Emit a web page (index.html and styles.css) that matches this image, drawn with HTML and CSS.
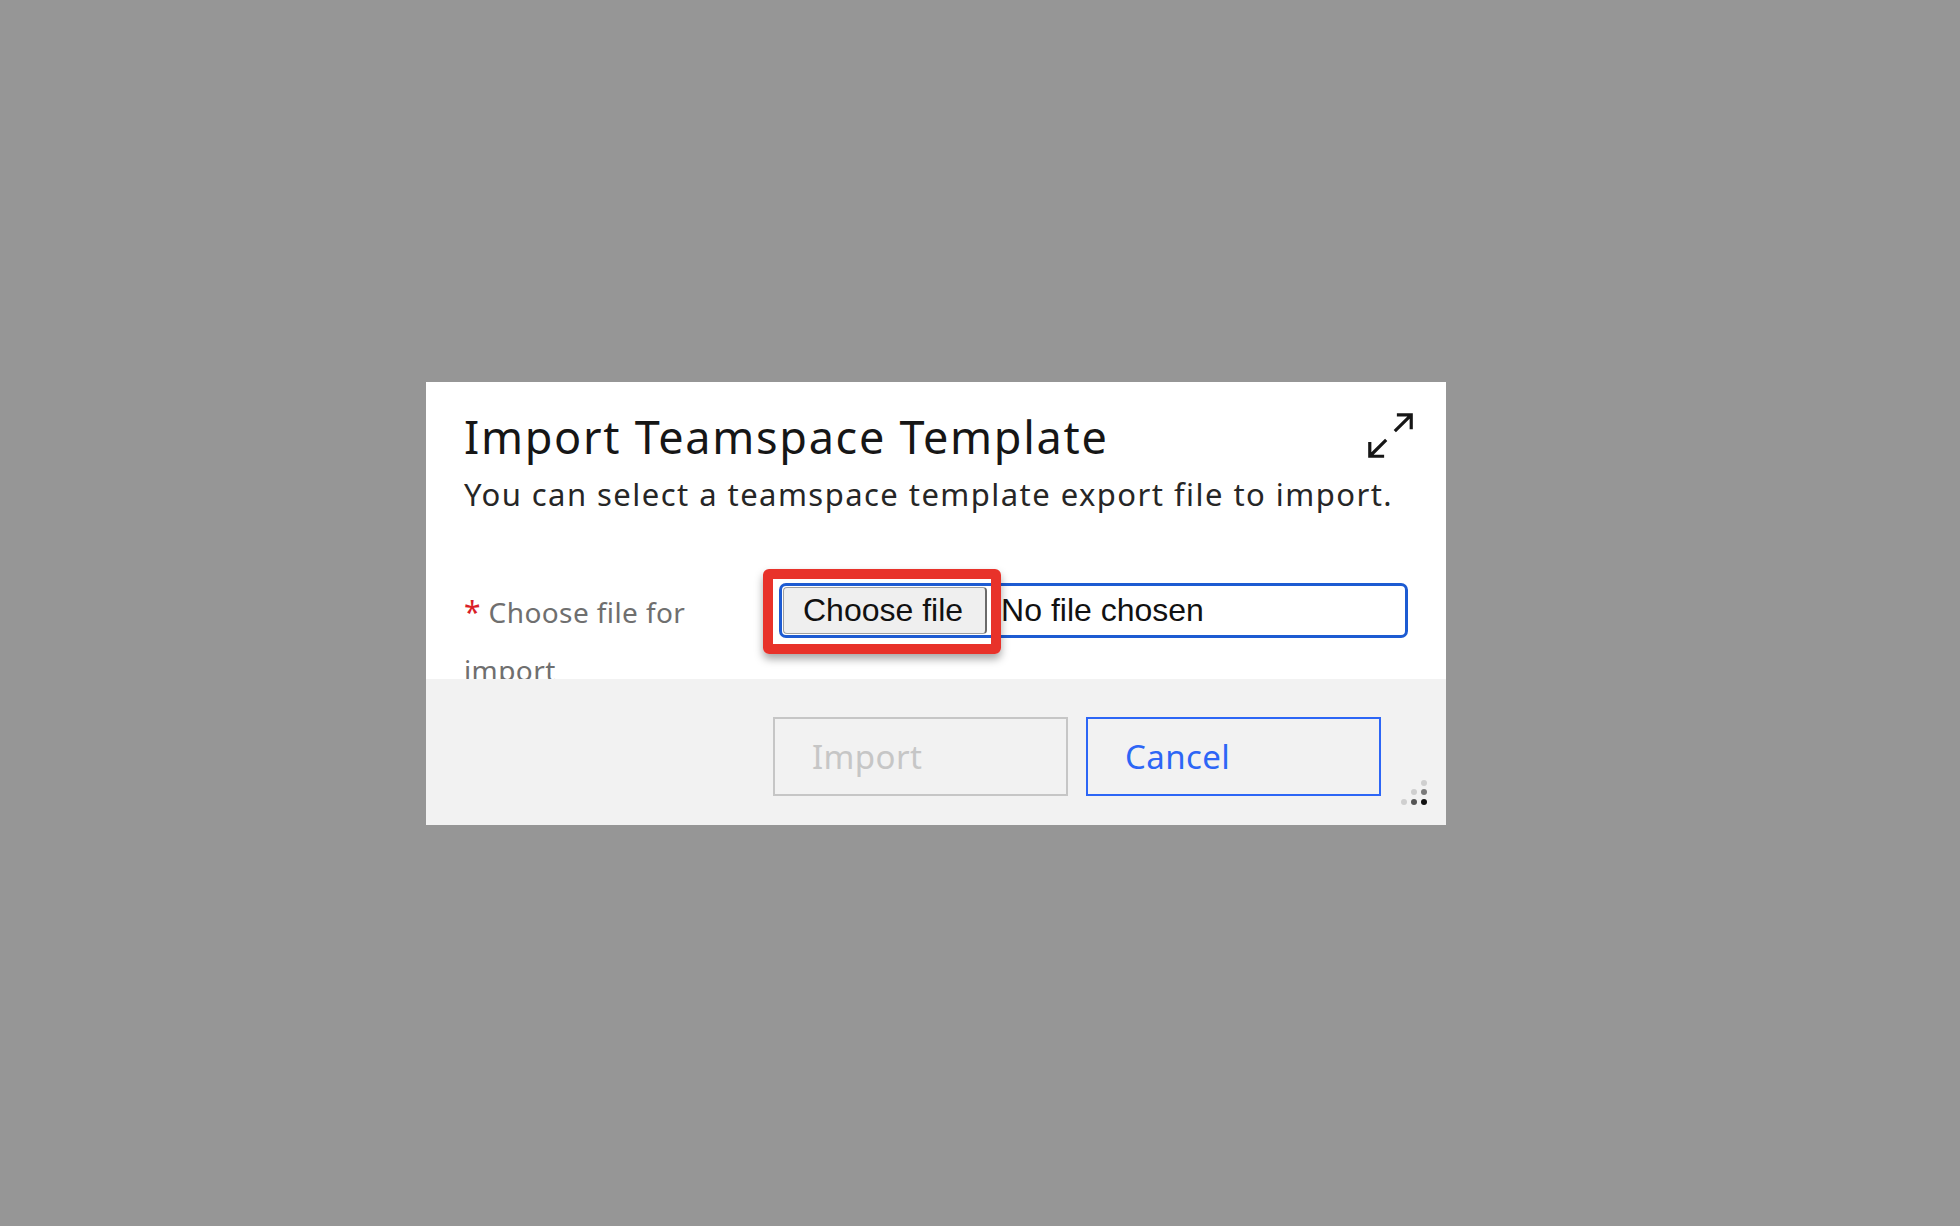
FILE: index.html
```html
<!DOCTYPE html>
<html lang="en">
<head>
<meta charset="utf-8">
<title>Import Teamspace Template</title>
<link rel="stylesheet" href="styles.css">
</head>
<body>
<div class="dialog" role="dialog" aria-labelledby="dlg-title">
  <div class="dialog-body">
    <div class="head">
      <h1 id="dlg-title" class="title">Import Teamspace Template</h1>
      <button class="expand" aria-label="Maximize">
        <svg viewBox="0 0 32 32" width="51" height="51" aria-hidden="true"><path d="M20 2v2h6.586L18 12.582 19.414 14 28 5.414V12h2V2H20zm-6 17.414L12.586 18 4 26.586V20H2v10h10v-2H5.414L14 19.414z"/></svg>
      </button>
      <p class="subtitle">You can select a teamspace template export file to import.</p>
    </div>
    <div class="field">
      <label class="field-label"><span class="req">*</span> Choose file for import</label>
      <div class="file-input">
        <span class="file-btn">Choose file</span>
        <span class="file-name">No file chosen</span>
        <span class="highlight"></span>
      </div>
    </div>
  </div>
  <div class="dialog-footer">
    <button class="btn btn-disabled" disabled>Import</button>
    <button class="btn btn-secondary">Cancel</button>
    <svg class="grip" viewBox="0 0 46 46" width="46" height="46" aria-hidden="true">
      <circle cx="24" cy="4" r="3" fill="#cfcfcf"/>
      <circle cx="14" cy="13" r="3" fill="#cfcfcf"/>
      <circle cx="24" cy="13" r="3" fill="#7a7a7a"/>
      <circle cx="4" cy="23" r="3" fill="#cfcfcf"/>
      <circle cx="14" cy="23" r="3" fill="#555"/>
      <circle cx="24" cy="23" r="3" fill="#111"/>
    </svg>
  </div>
</div>
</body>
</html>
```

FILE: styles.css
```css
html, body {
  margin: 0;
  padding: 0;
}
body {
  width: 1960px;
  height: 1226px;
  background: #969696;
  padding: 382px 0 0 426px;
  box-sizing: border-box;
  font-family: "Noto Sans", "Open Sans", sans-serif;
  overflow: hidden;
}
.dialog {
  position: relative;
  width: 1020px;
  height: 443px;
  background: #fff;
  display: flex;
  flex-direction: column;
}
.dialog-body {
  height: 297px;
  box-sizing: border-box;
  padding: 28px 30px 0 38px;
  overflow: hidden;
  flex: none;
}
.head {
  display: grid;
  grid-template-columns: 1fr auto;
  align-items: start;
}
.title {
  margin: 0;
  font-size: 45px;
  line-height: 54px;
  font-weight: 400;
  letter-spacing: 1.7px;
  color: #161616;
  white-space: nowrap;
}
.subtitle {
  grid-column: 1 / -1;
  margin: 10px 0 0;
  font-size: 31px;
  line-height: 40px;
  letter-spacing: 1.45px;
  color: #262626;
  white-space: nowrap;
}
.expand {
  border: 0;
  background: none;
  padding: 0;
  margin: 0;
  width: 51px;
  height: 51px;
  fill: #161616;
  cursor: pointer;
}
.expand svg {
  display: block;
}
.field {
  display: grid;
  grid-template-columns: 315px 629px;
  margin-top: 69px;
}
.field-label {
  font-size: 28px;
  line-height: 58px;
  letter-spacing: 0.4px;
  color: #6f6f6f;
  width: 240px;
}
.req {
  color: #da1e28;
  font-size: 30px;
}
.file-input {
  position: relative;
  display: flex;
  align-items: center;
  height: 55px;
  box-sizing: border-box;
  border: 3px solid #1d5bd2;
  border-radius: 7px;
  padding: 1px;
  font-family: "Liberation Sans", Arial, sans-serif;
  font-size: 32px;
  color: #111;
}
.file-btn {
  display: flex;
  align-items: center;
  height: 100%;
  box-sizing: border-box;
  padding: 0 22px 0 19px;
  background: #efefef;
  border: 1px solid #a0a0a0;
  border-right: 2px solid #6a6a6a;
  border-radius: 4px;
}
.file-name {
  margin-left: 14px;
}
.highlight {
  position: absolute;
  left: -19px;
  top: -17px;
  width: 238px;
  height: 85px;
  box-sizing: border-box;
  border: 10px solid #e8322a;
  border-radius: 6px;
  box-shadow: 0 5px 8px rgba(0, 0, 0, 0.35);
  pointer-events: none;
}
.dialog-footer {
  position: relative;
  flex: 1;
  background: #f2f2f2;
  display: flex;
  justify-content: flex-end;
  align-items: flex-start;
  gap: 18px;
  padding: 38px 65px 0 0;
}
.btn {
  width: 295px;
  height: 79px;
  box-sizing: border-box;
  border: 2px solid;
  background: transparent;
  text-align: left;
  padding: 0 0 0 37px;
  font-family: "Noto Sans", "Open Sans", sans-serif;
  font-size: 33px;
  line-height: 75px;
  letter-spacing: 0.4px;
}
.btn-disabled {
  border-color: #c6c6c6;
  color: #c6c6c6;
}
.btn-secondary {
  border-color: #2d66f6;
  color: #2d66f6;
  cursor: pointer;
}
.grip {
  position: absolute;
  right: 0;
  bottom: 0;
}
```
